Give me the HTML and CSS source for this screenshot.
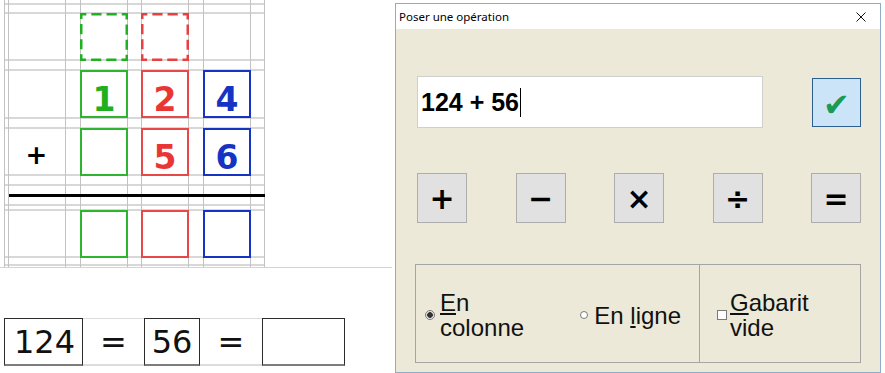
FILE: index.html
```html
<!DOCTYPE html>
<html lang="fr">
<head>
  <meta charset="UTF-8" />
  <meta name="viewport" content="width=device-width, initial-scale=1.0"/>
  <title>Poser une opération</title>
  <link rel="stylesheet" href="styles.css">
</head>
<body>

  <div class="page">
    <div class="work">
      <div class="board">
        <!-- quadrillage du cahier -->
        <svg class="lines" width="392" height="267" viewBox="0 0 392 267">
          <g stroke="#d8d8d8" stroke-width="2">
            <line x1="5" y1="4" x2="265" y2="4"/>
            <line x1="5" y1="13" x2="265" y2="13"/>
            <line x1="5" y1="60" x2="265" y2="60"/>
            <line x1="5" y1="70" x2="265" y2="70"/>
            <line x1="5" y1="118" x2="265" y2="118"/>
            <line x1="5" y1="128" x2="265" y2="128"/>
            <line x1="5" y1="175" x2="265" y2="175"/>
            <line x1="5" y1="185" x2="265" y2="185"/>
            <line x1="5" y1="205" x2="265" y2="205"/>
            <line x1="5" y1="210" x2="265" y2="210"/>
            <line x1="5" y1="257" x2="265" y2="257"/>
            <line x1="5" y1="265" x2="265" y2="265"/>
          </g>
          <g stroke="#c2c2c2" stroke-width="1">
            <line x1="4.5" y1="0" x2="4.5" y2="267"/>
            <line x1="8.5" y1="0" x2="8.5" y2="267"/>
            <line x1="65.5" y1="0" x2="65.5" y2="267"/>
            <line x1="80.5" y1="0" x2="80.5" y2="267"/>
            <line x1="127.5" y1="0" x2="127.5" y2="267"/>
            <line x1="141.5" y1="0" x2="141.5" y2="267"/>
            <line x1="188.5" y1="0" x2="188.5" y2="267"/>
            <line x1="203.5" y1="0" x2="203.5" y2="267"/>
            <line x1="250.5" y1="0" x2="250.5" y2="267"/>
            <line x1="264.5" y1="0" x2="264.5" y2="267"/>
          </g>
        </svg>

        <div class="cols">
          <div class="box dash col-g row-1">
            <svg width="48" height="48" viewBox="0 0 48 48"><rect x="1.25" y="1.25" width="45.5" height="45.5" fill="none" stroke="#22b022" stroke-width="2.5" stroke-dasharray="10.2 5" stroke-dashoffset="5.1"/></svg>
          </div>
          <div class="box dash col-r row-1">
            <svg width="48" height="48" viewBox="0 0 48 48"><rect x="1.25" y="1.25" width="45.5" height="45.5" fill="none" stroke="#e74040" stroke-width="2.5" stroke-dasharray="10.2 5" stroke-dashoffset="5.1"/></svg>
          </div>

          <div class="box green col-g row-2">1</div>
          <div class="box red col-r row-2">2</div>
          <div class="box blue col-b row-2">4</div>

          <div class="sign row-3">+</div>
          <div class="box green col-g row-3"></div>
          <div class="box red col-r row-3">5</div>
          <div class="box blue col-b row-3">6</div>

          <div class="rule"></div>

          <div class="box green col-g row-4"></div>
          <div class="box red col-r row-4"></div>
          <div class="box blue col-b row-4"></div>
        </div>
      </div>

      <div class="eq">
        <div class="num n1">124</div>
        <div class="op-cell o1">=</div>
        <div class="num n2">56</div>
        <div class="op-cell o2">=</div>
        <div class="num n3"></div>
      </div>
    </div>

    <div class="dialog">
      <div class="titlebar">
        <span>Poser une opération</span>
        <svg class="close" width="10" height="10" viewBox="0 0 10 10">
          <path d="M0.5 0.5 L9.5 9.5 M9.5 0.5 L0.5 9.5" stroke="#111" stroke-width="1" fill="none"/>
        </svg>
      </div>

      <div class="dlg-body">
        <div class="entry-row">
          <div class="entry">124 + 56<span class="caret"></span></div>
          <button class="ok">✔</button>
        </div>

        <div class="ops">
          <button class="op">+</button>
          <button class="op">−</button>
          <button class="op">×</button>
          <button class="op">÷</button>
          <button class="op">=</button>
        </div>

        <div class="modes">
          <div class="group layout">
            <label class="opt"><span class="radio on"></span><span class="txt"><u>E</u>n<br>colonne</span></label>
            <label class="opt opt-line"><span class="radio"></span><span class="txt">En <u>l</u>igne</span></label>
          </div>
          <div class="group blank">
            <label class="opt opt-check"><span class="check"></span><span class="txt"><u>G</u>abarit<br>vide</span></label>
          </div>
        </div>
      </div>
    </div>
  </div>

</body>
</html>
```

FILE: styles.css
```css
* { margin: 0; padding: 0; box-sizing: border-box; }
body {
  font-family: "Liberation Sans", Arial, sans-serif;
  background: #fff;
  color: #000;
}

.page {
  display: flex;
  width: 885px;
  height: 373px;
  overflow: hidden;
}

/* ---- colonne de gauche ---- */
.work {
  width: 395px;
  flex-shrink: 0;
}

.board {
  position: relative;
  width: 392px;
  height: 268px;
  border-bottom: 1px solid #d3d3d3;
}

.lines {
  position: absolute;
  left: 0;
  top: 0;
}

.cols {
  position: relative;
  display: grid;
  grid-template-columns: 8px 57px 15px 48px 13px 48px 14px 48px 14px;
  grid-template-rows: 13px 48px 9px 48px 10px 48px 34px 48px;
}

.box {
  width: 48px;
  height: 48px;
  border: 2px solid;
  background: #fff;
  display: flex;
  align-items: center;
  justify-content: center;
  padding-top: 10px;
  font: bold 33px "DejaVu Sans", Verdana, sans-serif;
}
.box.dash { border: none; padding: 0; background: transparent; }
.box.dash svg { display: block; }

.green { border-color: #2db52d; color: #1fb01f; }
.red { border-color: #e74848; color: #ea3535; }
.blue { border-color: #1634c4; color: #1634c4; }

.col-g { grid-column: 4; }
.col-r { grid-column: 6; }
.col-b { grid-column: 8; }
.row-1 { grid-row: 2; }
.row-2 { grid-row: 4; }
.row-3 { grid-row: 6; }
.row-4 { grid-row: 8; }

.sign {
  grid-column: 2;
  display: flex;
  align-items: center;
  justify-content: center;
  padding-top: 6px;
  font: bold 26px "DejaVu Sans", Verdana, sans-serif;
}

.rule {
  grid-column: 2 / 10;
  grid-row: 7;
  align-self: start;
  margin: 18px 0 0 1px;
  height: 3px;
  background: #000;
}

.eq {
  display: flex;
  height: 48px;
  margin: 50px 0 0 4px;
}

.num, .op-cell {
  display: flex;
  align-items: center;
  justify-content: center;
  font: 32px "DejaVu Sans", Verdana, sans-serif;
  color: #111;
}
.num {
  border: 1px solid #2b2b2b;
  border-bottom: 2px solid #7d7d7d;
}
.op-cell {
  border-top: 1px solid #dcdcdc;
  border-bottom: 2px solid #dcdcdc;
}
.n1 { width: 79px; padding-left: 2px; }
.o1 { width: 61px; }
.n2 { width: 56px; }
.o2 { width: 62px; }
.n3 { width: 83px; }

/* ---- boite de dialogue ---- */
.dialog {
  width: 486px;
  height: 370px;
  margin-top: 3px;
  border: 1px solid #8fadc9;
  background: #ece9d8;
}

.titlebar {
  height: 25px;
  background: #fff;
  display: flex;
  align-items: center;
  justify-content: space-between;
  padding: 0 14px 0 3px;
  font: 11.5px "Noto Sans", "Segoe UI", sans-serif;
}

.dlg-body {
  padding: 47px 19px 0 21px;
}

.entry-row {
  display: flex;
  justify-content: space-between;
  align-items: center;
}

.entry {
  width: 346px;
  height: 52px;
  background: #fff;
  border: 1px solid #cfcfcf;
  display: flex;
  align-items: center;
  padding-left: 3px;
  font: bold 25px "Liberation Sans", Arial, sans-serif;
}

.caret {
  width: 1px;
  height: 29px;
  background: #000;
  margin-left: 1px;
}

button {
  font-family: inherit;
  cursor: pointer;
}

.ok {
  width: 49px;
  height: 49px;
  background: #cce4f7;
  border: 1px solid #2d5f8f;
  color: #1a9a52;
  font: 32px "DejaVu Sans", sans-serif;
  padding-top: 6px;
}

.ops {
  display: flex;
  justify-content: space-between;
  margin-top: 45px;
}

.op {
  width: 50px;
  height: 50px;
  background: #e1e1e1;
  border: 1px solid #adadad;
  color: #000;
  font: bold 30px "DejaVu Sans", sans-serif;
}

.modes {
  display: flex;
  height: 99px;
  margin: 41px 0 0 -2px;
}

.group {
  border: 1px solid #a5a5a5;
  display: flex;
  align-items: center;
  padding-top: 3px;
}
.layout {
  width: 285px;
  justify-content: space-between;
  padding-left: 9px;
  padding-right: 18px;
}
.blank {
  width: 161px;
  border-left: none;
  padding-left: 17px;
}

.opt {
  display: flex;
  align-items: center;
  font-size: 24px;
  line-height: 25px;
  color: #111;
}

.radio {
  width: 10px;
  height: 10px;
  border-radius: 50%;
  border: 1px solid #7a7a7a;
  background: #fff;
  margin-right: 5px;
}
.radio.on {
  background: radial-gradient(circle, #333 0 2.5px, #bbb 3px, #fff 4px);
}
.opt-line .radio {
  width: 8px;
  height: 8px;
  margin-right: 6px;
}

.check {
  width: 10px;
  height: 10px;
  border: 1px solid #7a7a7a;
  background: #fff;
  margin-right: 3px;
}
```
